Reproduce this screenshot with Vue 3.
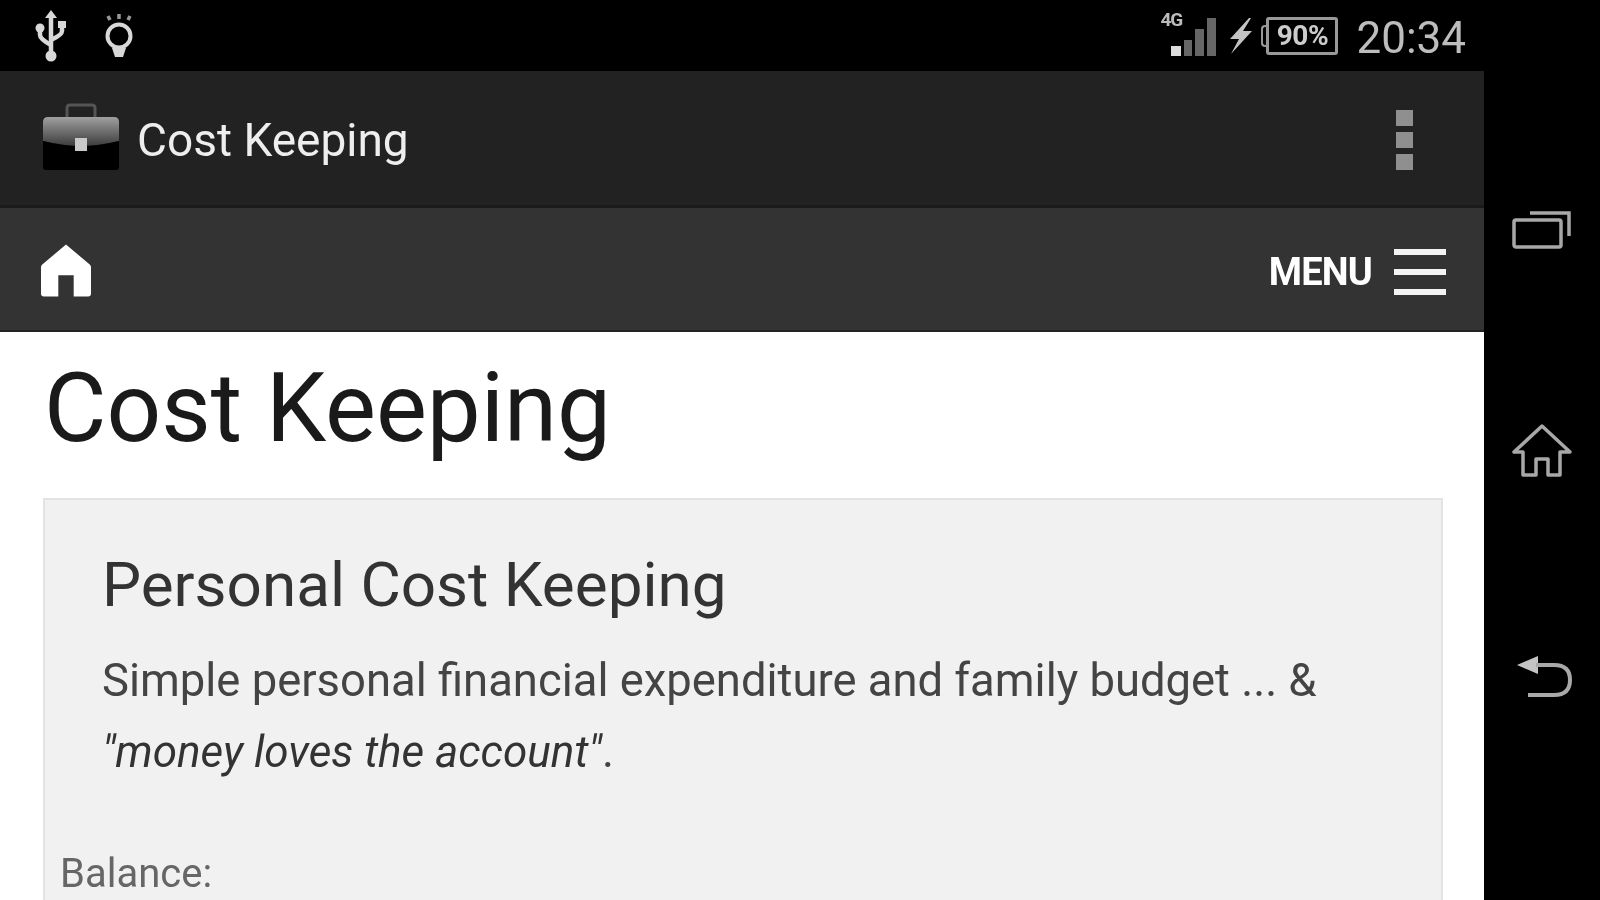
<template>
  <div class="device">
    <div class="screen">
      <div class="status-bar">
        <div class="status-left">
          <svg class="usb" width="34" height="52" viewBox="0 0 34 52" fill="none" stroke="#d8d8d8" stroke-width="4.5">
            <path d="M17 5V46" />
            <path d="M17 0l-6 8h12z" fill="#d8d8d8" stroke="none" />
            <path d="M6 20v5q0 4 11 10M28 16v5q0 4-11 9" />
            <circle cx="6" cy="18" r="4.5" fill="#d8d8d8" stroke="none" />
            <rect x="24" y="11" width="8" height="7" fill="#d8d8d8" stroke="none" />
            <circle cx="17" cy="46" r="5.5" fill="#d8d8d8" stroke="none" />
          </svg>
          <svg class="bulb" width="32" height="46" viewBox="0 0 32 46" fill="none" stroke="#d8d8d8">
            <circle cx="16" cy="23" r="11.5" stroke-width="4" />
            <path d="M9 35h14l-3 9h-8z" fill="#d8d8d8" stroke="none" />
            <path d="M5 3l2 4M16 1v5M27 3l-2 4" stroke-width="3.5" opacity=".7" />
          </svg>
        </div>
        <div class="status-right">
          <div class="signal">
            <span class="net">4G</span>
            <svg width="46" height="42" viewBox="0 0 46 42">
              <rect x="0" y="29" width="10" height="10" fill="#ddd" />
              <rect x="13" y="23" width="8" height="16" fill="#666" />
              <rect x="24" y="12" width="9" height="27" fill="#666" />
              <rect x="36" y="1" width="9" height="38" fill="#666" />
            </svg>
          </div>
          <svg class="bolt" width="24" height="36" viewBox="0 0 24 36">
            <path d="M20 0L1 21h9L2 36l21-23h-9l8-13z" fill="#c4c4c4" />
          </svg>
          <div class="battery"><span>90%</span></div>
          <span class="clock">20:34</span>
        </div>
      </div>

      <header class="action-bar">
        <div class="brand">
          <svg class="case" width="80" height="70" viewBox="0 0 80 70">
            <defs>
              <linearGradient id="caseTop" x1="0" y1="0" x2="0" y2="1">
                <stop offset="0%" stop-color="#a0a0a0" />
                <stop offset="100%" stop-color="#3c3c3c" />
              </linearGradient>
            </defs>
            <path d="M26 16V6q0-3 3-3h22q3 0 3 3v10" fill="none" stroke="#555" stroke-width="3" />
            <path d="M2 20q0-5 5-5h66q5 0 5 5v19q-20 5-38 5t-38-5z" fill="url(#caseTop)" />
            <path d="M2 39q20 5 38 5t38-5v26q0 3-3 3H5q-3 0-3-3z" fill="#000" />
            <rect x="34" y="36" width="12" height="13" fill="#c9c9c9" />
          </svg>
          <span class="app-name">Cost Keeping</span>
        </div>
        <div class="kebab"><i></i><i></i><i></i></div>
      </header>

      <nav class="nav-bar">
        <svg class="home-solid" width="50" height="53" viewBox="0 0 52 54">
          <path d="M26 0L51 21Q52 22 52 24V51Q52 54 49 54H34V32H18V54H3Q0 54 0 51V24Q0 22 1 21Z" fill="#fff" />
        </svg>
        <div class="menu">
          <span>MENU</span>
          <div class="burger"><i></i><i></i><i></i></div>
        </div>
      </nav>

      <main class="content">
        <h1>Cost Keeping</h1>
        <section class="well">
          <h2>Personal Cost Keeping</h2>
          <p>Simple personal financial expenditure and family budget ... &amp;<br /><em>"money loves the account"</em>.</p>
          <label>Balance:</label>
        </section>
      </main>
    </div>

    <aside class="soft-keys">
      <svg width="60" height="40" viewBox="0 0 60 40" fill="none" stroke="#a8a8a8" stroke-width="3.5">
        <rect x="2" y="10" width="47" height="27" rx="2" />
        <path d="M18 3H57V26" />
      </svg>
      <svg width="60" height="54" viewBox="0 0 60 54" fill="none" stroke="#a8a8a8" stroke-width="3.5" stroke-linejoin="round">
        <path d="M30 2L2 28H11V51H24V35H36V51H48V28H58Z" />
      </svg>
      <svg class="back" width="60" height="44" viewBox="0 0 60 44" fill="none" stroke="#a8a8a8" stroke-width="4">
        <path d="M3 9L24 0V18Z" fill="#c4c4c4" stroke="none" />
        <path d="M22 9H40Q56 9 56 24T40 39H14" />
      </svg>
    </aside>
  </div>
</template>

<script setup>
</script>

<style>
html, body {
  margin: 0;
  background: #000;
  overflow: hidden;
}
</style>

<style scoped>
.device {
  display: flex;
  width: 1600px;
  height: 900px;
  overflow: hidden;
  font-family: Roboto, "Liberation Sans", sans-serif;
  background: #000;
  filter: blur(0.7px);
}

.screen {
  width: 1484px;
  height: 900px;
  display: flex;
  flex-direction: column;
  background: #fff;
}

.status-bar {
  height: 71px;
  flex: none;
  background: #000;
  display: flex;
  justify-content: space-between;
  align-items: center;
  padding: 0 18px 0 34px;
  box-sizing: border-box;
}

.status-left {
  display: flex;
  align-items: center;
  gap: 35px;
  height: 71px;
}

.status-right {
  display: flex;
  align-items: center;
  height: 71px;
}

.signal {
  position: relative;
  width: 46px;
  height: 42px;
  margin-right: 12px;
  margin-top: 4px;
}

.net {
  position: absolute;
  left: -11px;
  top: -9px;
  font-size: 19px;
  font-weight: 700;
  color: #bbb;
  letter-spacing: -1px;
}

.signal svg { display: block; }

.bolt { margin-right: 13px; margin-top: 0; }

.battery {
  width: 72px;
  height: 38px;
  border: 3px solid #999;
  border-radius: 3px;
  box-sizing: border-box;
  display: flex;
  align-items: center;
  justify-content: center;
  margin-right: 18px;
  position: relative;
}

.battery::before {
  content: "";
  position: absolute;
  left: -8px;
  top: 5px;
  width: 6px;
  height: 22px;
  border: 2px solid #999;
  border-right: none;
  border-radius: 4px 0 0 4px;
  box-sizing: border-box;
}

.battery span {
  font-size: 28px;
  font-weight: 700;
  color: #ccc;
  letter-spacing: -0.5px;
}

.clock {
  font-size: 44px;
  font-weight: 400;
  color: #bdbdbd;
  line-height: 1;
  margin-top: 4px;
}

.action-bar {
  height: 137px;
  flex: none;
  background: #222;
  border-bottom: 3px solid #1a1a1a;
  box-sizing: border-box;
  display: flex;
  justify-content: space-between;
  align-items: center;
  padding: 4px 71px 0 41px;
}

.brand {
  display: flex;
  align-items: center;
  gap: 16px;
}

.case { margin-top: -6px; }

.app-name {
  font-size: 46px;
  color: #eee;
  line-height: 1;
}

.kebab {
  display: flex;
  flex-direction: column;
  gap: 6px;
}

.kebab i {
  display: block;
  width: 17px;
  height: 16px;
  background: #8f8f8f;
}

.nav-bar {
  height: 124px;
  flex: none;
  background: #333;
  border-bottom: 2px solid #222;
  box-sizing: border-box;
  display: flex;
  justify-content: space-between;
  align-items: center;
  padding: 5px 38px 0 41px;
}

.home-solid { margin-top: -3px; }

.menu {
  display: flex;
  align-items: center;
  gap: 22px;
  color: #fff;
  font-size: 38px;
  font-weight: 700;
  letter-spacing: -0.8px;
}

.burger {
  display: flex;
  flex-direction: column;
  gap: 14px;
}

.burger i {
  display: block;
  width: 52px;
  height: 6px;
  background: #f4f4f4;
}

.content {
  flex: 1;
  padding: 0 41px 0 43px;
  min-height: 0;
}

h1 {
  margin: 24px 0 0 1px;
  font-size: 96px;
  font-weight: 400;
  line-height: 1.1;
  color: #1a1a1a;
}

.well {
  margin-top: 36px;
  height: 500px;
  background: #f1f1f1;
  border: 2px solid #e3e3e3;
  box-sizing: border-box;
  padding: 48px 58px 0 15px;
}

h2 {
  margin: 0 0 0 42px;
  font-size: 62px;
  font-weight: 400;
  line-height: 1.2;
  color: #333;
}

p {
  margin: 23px 0 0 42px;
  font-size: 45.4px;
  line-height: 71px;
  color: #444;
}

p em {
  font-size: 44px;
  color: #333;
}

label {
  display: block;
  margin-top: 62px;
  font-size: 40px;
  color: #666;
}

.soft-keys {
  flex: 1;
  background: #000;
  display: flex;
  flex-direction: column;
  align-items: center;
  padding-top: 210px;
  box-sizing: border-box;
}

.soft-keys svg:nth-child(2) { margin-top: 174px; }

.soft-keys .back {
  margin-top: 178px;
  margin-left: 4px;
}
</style>
